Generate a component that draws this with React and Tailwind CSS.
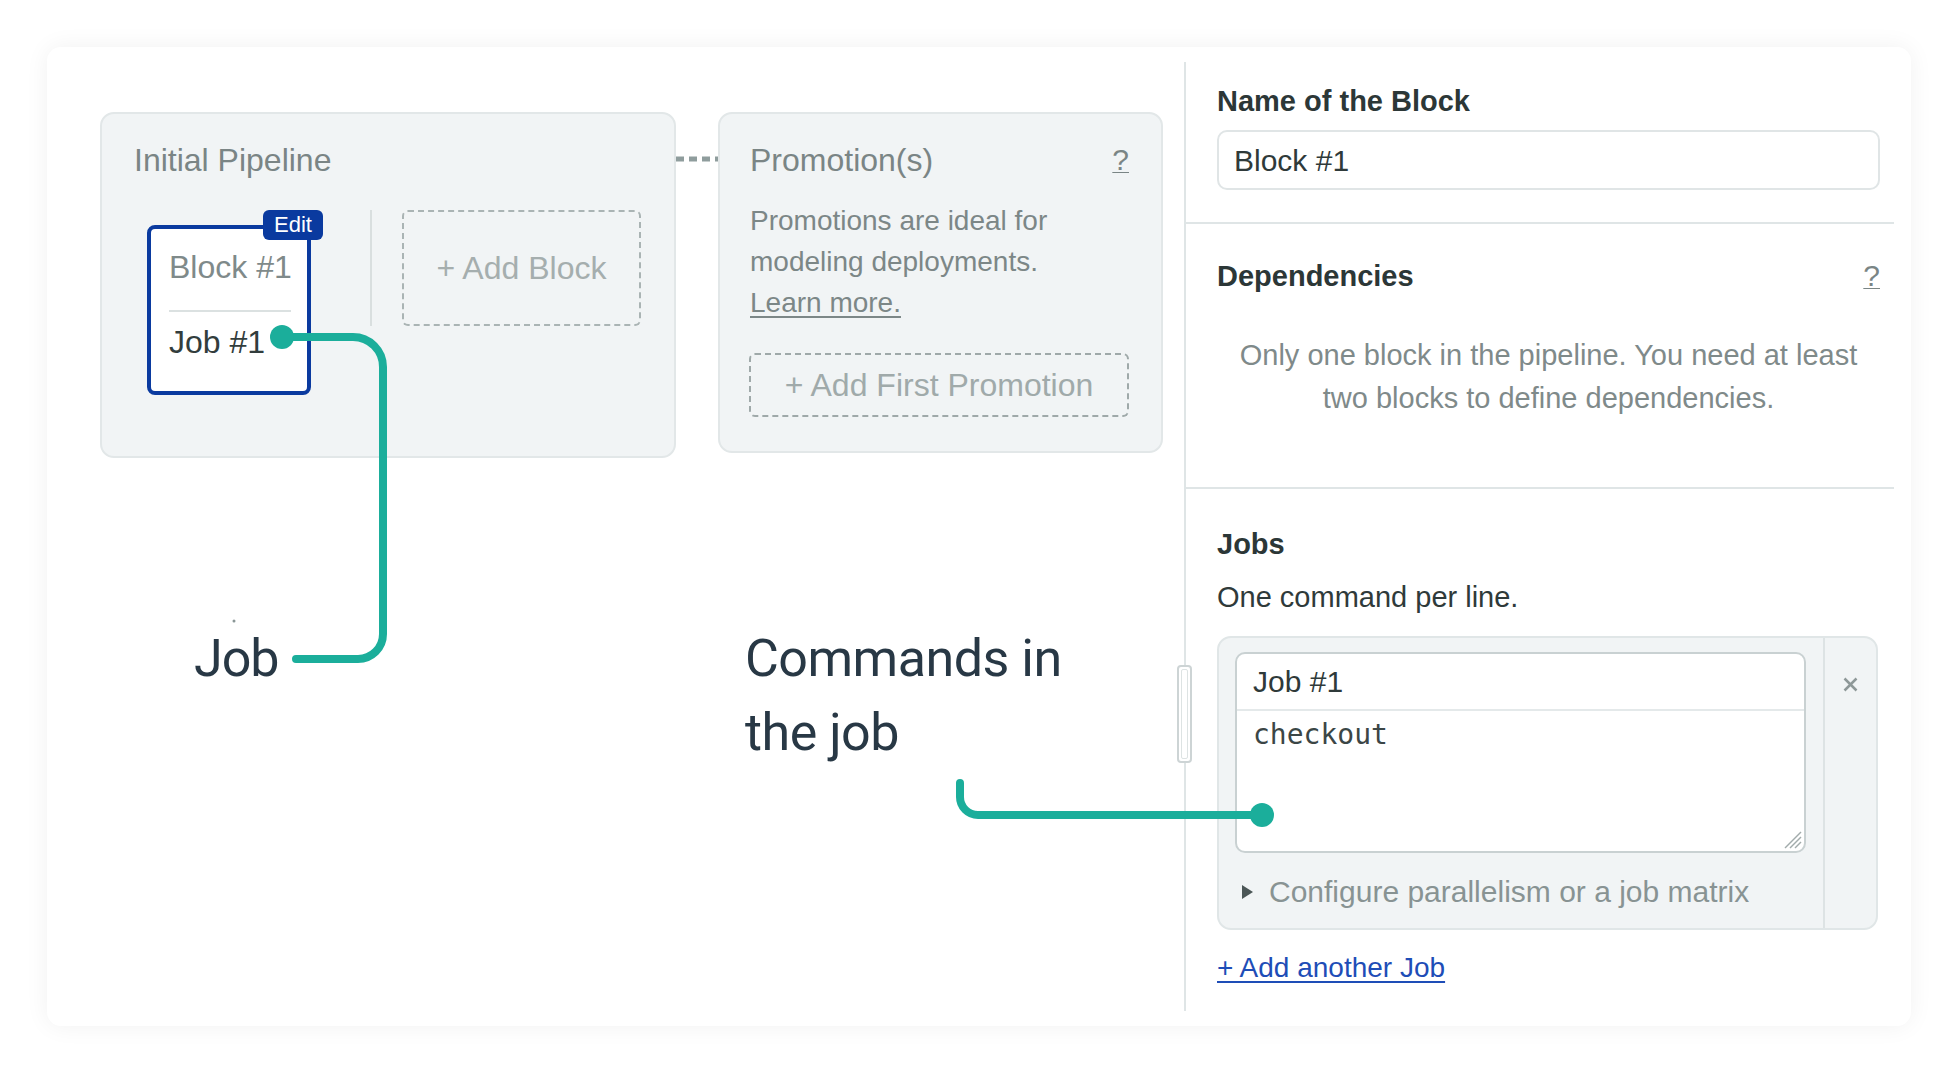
const ui = "font-['Liberation_Sans',Arial,sans-serif]";

function Badge() {
  return (
    <div className="absolute -top-[15px] -right-[12px] flex h-[30px] w-[60px] items-center justify-center rounded-[6px] bg-[#0a3a9f] text-[22px] leading-none text-white">
      Edit
    </div>
  );
}

function BlockCard() {
  return (
    <div className="relative mt-[15px] h-[170px] w-[164px]">
      <div className="h-full w-full rounded-[8px] border-4 border-[#0a3a9f] bg-white pl-[18px] pr-[14px] pt-[18px]">
        <div className="whitespace-nowrap text-[32px] leading-[40px] text-[#7f8a8a]">Block #1</div>
        <div className="mr-[2px] mt-[23px] h-[2px] bg-[#dbe1e1]" />
        <div className="mt-[10px] whitespace-nowrap text-[32px] leading-[40px] text-[#323d3d]">Job #1</div>
      </div>
      <Badge />
    </div>
  );
}

function InitialPipeline() {
  return (
    <div className="h-[346px] w-[576px] rounded-[14px] border-2 border-[#e2e7e8] bg-[#f1f4f5] pl-[32px] pt-[26px]">
      <div className="text-[32px] leading-[40px] text-[#7a8585]">Initial Pipeline</div>
      <div className="ml-[13px] mt-[30px] flex items-start">
        <BlockCard />
        <div className="ml-[59px] h-[116px] w-[2px] bg-[#d9dfdf]" />
        <div className="ml-[30px] flex h-[116px] w-[239px] items-center justify-center rounded-[6px] border-2 border-dashed border-[#aab4b4] text-[32px] text-[#a5aeae]">
          + Add Block
        </div>
      </div>
    </div>
  );
}

function Promotions() {
  return (
    <div className="h-[341px] w-[445px] rounded-[14px] border-2 border-[#e2e7e8] bg-[#f1f4f5] pl-[30px] pr-[32px] pt-[26px]">
      <div className="flex items-center justify-between leading-[40px]">
        <span className="text-[32px] text-[#7a8585]">Promotion(s)</span>
        <span className="text-[30px] text-[#7a8585] underline decoration-1 underline-offset-2">?</span>
      </div>
      <p className="mt-[20px] text-[28px] leading-[41px] text-[#7c8787]">
        Promotions are ideal for
        <br />
        modeling deployments.
        <br />
        <span className="underline decoration-2 underline-offset-4">Learn more.</span>
      </p>
      <div className="-ml-px mt-[30px] flex h-[64px] w-[380px] items-center justify-center rounded-[6px] border-2 border-dashed border-[#9fa9a9] text-[32px] text-[#a0aaaa]">
        + Add First Promotion
      </div>
    </div>
  );
}

function Connector() {
  return (
    <svg width="42" height="6" className="mt-[44px] shrink-0">
      <line x1="0" y1="3" x2="42" y2="3" stroke="#8f9d9d" strokeWidth="5" strokeDasharray="8 5" />
    </svg>
  );
}

function JobBox() {
  return (
    <div className="flex h-[294px] rounded-[14px] border-2 border-[#e0e6e7] bg-[#f1f4f5]">
      <div className="flex-1 pl-[16px] pr-[17px] pt-[14px]">
        <div className="h-[201px] overflow-hidden rounded-[10px] border-2 border-[#c9d1d2] bg-white">
          <div className="flex h-[57px] items-center border-b-2 border-[#e4e9ea] pl-[16px] text-[30px] text-[#2f3a3a]">
            Job #1
          </div>
          <div className="relative h-[140px] pl-[16px] pt-[6px] font-['DejaVu_Sans_Mono',monospace] text-[28px] leading-[36px] text-[#3b4646]">
            checkout
            <svg width="20" height="20" className="absolute bottom-[2px] right-[2px]">
              <line x1="19" y1="3" x2="3" y2="19" stroke="#a2abab" strokeWidth="1.5" />
              <line x1="19" y1="8" x2="8" y2="19" stroke="#a2abab" strokeWidth="1.5" />
              <line x1="19" y1="13" x2="13" y2="19" stroke="#a2abab" strokeWidth="1.5" />
            </svg>
          </div>
        </div>
        <div className="mt-[19px] flex items-center pl-[7px] leading-[40px]">
          <svg width="11" height="14" className="shrink-0">
            <polygon points="0,0 11,7 0,14" fill="#4b5656" />
          </svg>
          <span className="ml-[16px] text-[30px] text-[#889393]">Configure parallelism or a job matrix</span>
        </div>
      </div>
      <div className="w-[2px] bg-[#dde3e4]" />
      <div className="flex w-[51px] justify-center pt-[39px]">
        <svg width="15" height="15">
          <line x1="1.5" y1="1.5" x2="13.5" y2="13.5" stroke="#8e9898" strokeWidth="2.5" />
          <line x1="13.5" y1="1.5" x2="1.5" y2="13.5" stroke="#8e9898" strokeWidth="2.5" />
        </svg>
      </div>
    </div>
  );
}

function RightPanel() {
  return (
    <div className="w-[708px] text-[#2c3737]">
      <section className="border-b-2 border-[#dfe5e6] pb-[32px] pl-[31px] pr-[14px] pt-[36px]">
        <h3 className="text-[29px] font-bold leading-[36px]">Name of the Block</h3>
        <div className="mt-[11px] flex h-[60px] items-center rounded-[10px] border-2 border-[#e0e5e6] pl-[15px] text-[30px] text-[#2f3a3a]">
          Block #1
        </div>
      </section>
      <section className="border-b-2 border-[#dfe5e6] pb-[67px] pl-[31px] pr-[14px] pt-[34px]">
        <div className="flex items-center justify-between leading-[36px]">
          <h3 className="text-[29px] font-bold">Dependencies</h3>
          <span className="text-[30px] text-[#7a8585] underline decoration-1 underline-offset-2">?</span>
        </div>
        <p className="mt-[40px] text-center text-[29px] leading-[43px] text-[#7f8a8a]">
          Only one block in the pipeline. You need at least
          <br />
          two blocks to define dependencies.
        </p>
      </section>
      <section className="pl-[31px] pr-[16px] pt-[37px]">
        <h3 className="text-[29px] font-bold leading-[36px]">Jobs</h3>
        <p className="mt-[15px] text-[29px] leading-[40px] text-[#2f3a3a]">One command per line.</p>
        <div className="mt-[19px]">
          <JobBox />
        </div>
        <div className="mt-[18px] text-[28px] leading-[40px] text-[#1e4db7] underline decoration-2 underline-offset-4">
          + Add another Job
        </div>
      </section>
    </div>
  );
}

function Annotations() {
  return (
    <>
      <svg width="1958" height="1074" className="pointer-events-none absolute left-0 top-0">
        <path
          d="M282 337 H353 A30 30 0 0 1 383 367 V634 A25 25 0 0 1 358 659 H296"
          fill="none"
          stroke="#1bae9b"
          strokeWidth="8"
          strokeLinecap="round"
        />
        <circle cx="282" cy="337" r="12" fill="#1bae9b" />
        <path
          d="M960 783 V797 A18 18 0 0 0 978 815 H1262"
          fill="none"
          stroke="#1bae9b"
          strokeWidth="8"
          strokeLinecap="round"
        />
        <circle cx="1262" cy="815" r="12" fill="#1bae9b" />
        <circle cx="234" cy="621" r="1.5" fill="#8a9696" />
      </svg>
      <div className="absolute left-[194px] top-[622px] font-['Roboto',sans-serif] text-[52px] leading-[74px] tracking-[-1px] text-[#283845]">
        Job
      </div>
      <div className="absolute left-[745px] top-[622px] font-['Roboto',sans-serif] text-[52px] leading-[74px] tracking-[-0.5px] text-[#283845]">
        Commands in
        <br />
        the job
      </div>
    </>
  );
}

export default function App() {
  return (
    <div className={`relative h-[1074px] w-[1958px] overflow-hidden bg-white ${ui}`}>
      <div className="pl-[47px] pt-[47px]">
        <div className="flex h-[979px] w-[1864px] rounded-[14px] bg-white shadow-[0_0_24px_rgba(0,0,0,0.06)]">
          <div className="w-[1137px] pl-[53px] pt-[65px]">
            <div className="flex items-start">
              <InitialPipeline />
              <Connector />
              <Promotions />
            </div>
          </div>
          <div className="relative my-[15px] w-[2px] bg-[#dfe5e6]">
            <div className="absolute -left-[7px] top-[603px] h-[98px] w-[15px] rounded-[4px] border-2 border-[#cdd4d5] bg-white p-[2px]">
              <div className="h-full w-full rounded-[2px] border border-[#dde3e3]" />
            </div>
          </div>
          <RightPanel />
        </div>
      </div>
      <Annotations />
    </div>
  );
}
